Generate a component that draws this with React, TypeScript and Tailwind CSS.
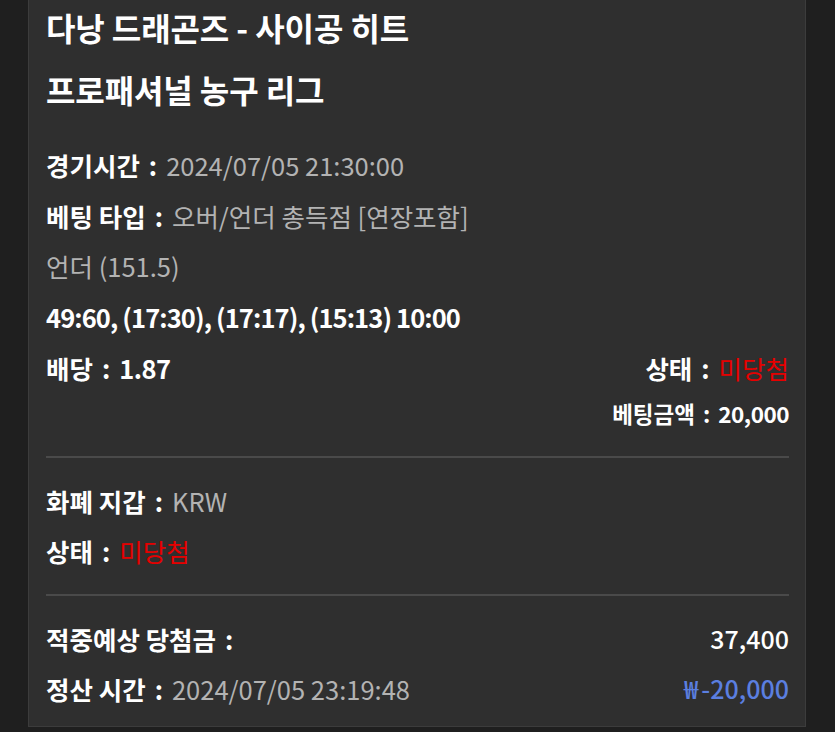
import React from "react";

const font = { fontFamily: '"Noto Sans CJK KR", "Noto Sans", sans-serif' };

function Colon() {
  return <span className="font-bold text-white mx-[9px]">:</span>;
}

export default function App() {
  return (
    <div className="w-[835px] h-[732px] bg-[#1f1f1f] overflow-hidden" style={font}>
      <div className="ml-[28px] w-[778px] mt-[-20px] bg-[#2f2f2f] border border-[#3c3c3c] pl-[17px] pr-[16px] pt-[15px] pb-[12px]">
        <div className="text-[32px] font-bold text-white leading-[62px] tracking-[-0.1px]">
          <div>다낭 드래곤즈 - 사이공 히트</div>
          <div>프로패셔널 농구 리그</div>
        </div>
        <div className="mt-[20px] text-[25.5px]">
          <div className="h-[50.6px] flex items-center whitespace-nowrap">
            <span className="font-bold text-white">경기시간</span>
            <Colon />
            <span className="text-[#b3b3b3]">2024/07/05 21:30:00</span>
          </div>
          <div className="h-[50.6px] flex items-center whitespace-nowrap">
            <span className="font-bold text-white">베팅 타입</span>
            <Colon />
            <span className="text-[#b3b3b3]">오버/언더 총득점 [연장포함]</span>
          </div>
          <div className="h-[50.6px] flex items-center text-[#b3b3b3]">언더 (151.5)</div>
          <div className="h-[50.6px] flex items-center text-white font-bold tracking-[-0.9px] whitespace-nowrap">
            49:60, (17:30), (17:17), (15:13) 10:00
          </div>
          <div className="h-[50.6px] flex items-center justify-between font-bold text-white whitespace-nowrap">
            <div>
              배당<span className="mx-[9px]">:</span>
              <span className="tracking-[-0.5px]">1.87</span>
            </div>
            <div>
              상태<span className="mx-[9px]">:</span>
              <span className="text-[#e60000] font-normal">미당첨</span>
            </div>
          </div>
          <div className="h-[42px] flex items-center justify-end text-[22.5px] font-bold text-white whitespace-nowrap">
            베팅금액<span className="mx-[8px]">:</span>
            <span className="tracking-[-0.5px]">20,000</span>
          </div>
        </div>
        <div className="mt-[21px] h-[2px] bg-[#4a4a4a]" />
        <div className="mt-[18px] text-[25.5px]">
          <div className="h-[50px] flex items-center whitespace-nowrap">
            <span className="font-bold text-white">화폐 지갑</span>
            <Colon />
            <span className="text-[#b3b3b3]">KRW</span>
          </div>
          <div className="h-[50px] flex items-center whitespace-nowrap">
            <span className="font-bold text-white">상태</span>
            <Colon />
            <span className="text-[#e60000]">미당첨</span>
          </div>
        </div>
        <div className="mt-[18px] h-[2px] bg-[#4a4a4a]" />
        <div className="mt-[18px] text-[25.5px]">
          <div className="h-[50px] flex items-center justify-between whitespace-nowrap">
            <div className="font-bold text-white">
              적중예상 당첨금<span className="mx-[9px]">:</span>
            </div>
            <div className="text-white font-medium text-[25px]">37,400</div>
          </div>
          <div className="h-[50px] flex items-center justify-between whitespace-nowrap">
            <div>
              <span className="font-bold text-white">정산 시간</span>
              <Colon />
              <span className="text-[#b3b3b3]">2024/07/05 23:19:48</span>
            </div>
            <div className="text-[#5b7fe0] font-medium text-[25px]">
              ₩<span className="ml-[3px]">-20,000</span>
            </div>
          </div>
        </div>
      </div>
    </div>
  );
}
